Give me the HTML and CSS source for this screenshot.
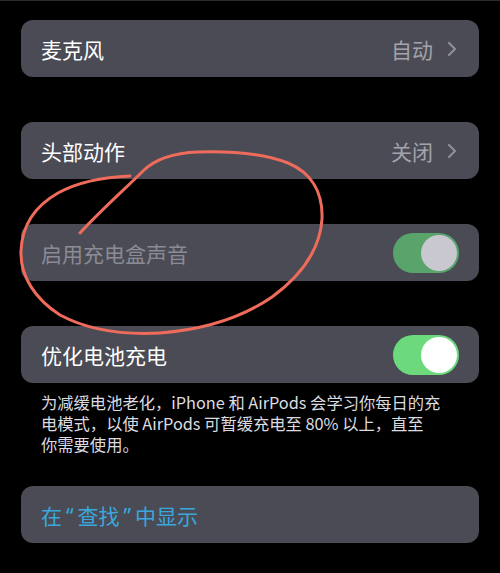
FILE: index.html
```html
<!DOCTYPE html>
<html lang="zh-CN">
<head>
  <meta charset="UTF-8">
  <meta name="viewport" content="width=device-width, initial-scale=1.0">
  <title>AirPods 设置</title>
  <link rel="stylesheet" href="styles.css">
</head>
<body>
  <div class="page">
    <div class="list">
      <div class="card row">
        <span class="label">麦克风</span>
        <span class="value">自动
          <svg class="chevron" width="10" height="16" viewBox="0 0 10 16"><path d="M2 2 L8 8 L2 14" /></svg>
        </span>
      </div>

      <div class="card row">
        <span class="label">头部动作</span>
        <span class="value">关闭
          <svg class="chevron" width="10" height="16" viewBox="0 0 10 16"><path d="M2 2 L8 8 L2 14" /></svg>
        </span>
      </div>

      <div class="card row disabled">
        <span class="label">启用充电盒声音</span>
        <span class="switch on"><span class="knob"></span></span>
      </div>

      <div class="group">
        <div class="card row">
          <span class="label">优化电池充电</span>
          <span class="switch on"><span class="knob"></span></span>
        </div>
        <p class="note">为减缓电池老化，iPhone 和 AirPods 会学习你每日的充<br>电模式，以使 AirPods 可暂缓充电至 80% 以上，直至<br>你需要使用。</p>
      </div>

      <div class="card row">
        <span class="label link">在<span class="quote">“</span>查找<span class="quote">”</span>中显示</span>
      </div>
    </div>

    <svg class="scribble" width="500" height="573" viewBox="0 0 500 573">
      <path d="M130 175 C105 176 80 180 58 192 C35 205 22 225 21 250 C20 275 35 298 60 314 C90 330 125 334 160 332 C200 329 240 318 272 296 C302 274 320 248 322 218 C323 192 312 172 288 162 C262 152 230 150 198 151 C172 152 155 158 143 170 C125 188 100 210 80 232" />
    </svg>
  </div>
</body>
</html>
```

FILE: styles.css
```css
body {
  margin: 0;
  background: #000;
  font-family: "Noto Sans CJK SC", "Noto Sans", sans-serif;
  color: #fff;
}
.page {
  position: relative;
  width: 500px;
  height: 573px;
  overflow: hidden;
  border-top: 1px solid #2b2b2e;
  box-sizing: border-box;
}
.list {
  display: flex;
  flex-direction: column;
  gap: 45px;
  padding: 19px 21px 0;
}
.card {
  background: #4a4b55;
  border-radius: 12px;
  height: 57px;
}
.row {
  display: flex;
  align-items: center;
  justify-content: space-between;
  padding: 0 20px;
}
.label {
  font-size: 21px;
}
.value {
  display: flex;
  align-items: center;
  gap: 14px;
  font-size: 21px;
  color: #a3a3ab;
  padding-right: 2px;
}
.chevron path {
  fill: none;
  stroke: #8e8e96;
  stroke-width: 2.2;
  stroke-linecap: round;
  stroke-linejoin: round;
}
.disabled .label {
  color: #8a8b94;
}
.switch {
  position: relative;
  width: 66px;
  height: 40px;
  border-radius: 20px;
  background: #6bd97c;
}
.switch .knob {
  position: absolute;
  top: 2px;
  right: 2px;
  width: 36px;
  height: 36px;
  border-radius: 50%;
  background: #fff;
}
.disabled .switch {
  background: #58a46b;
}
.disabled .knob {
  background: #c9c8d1;
}
.group {
  margin-bottom: -14px;
}
.group .note {
  margin: 9px 0 0;
  padding: 0 20px;
  font-size: 16.3px;
  line-height: 21px;
  color: #dcdce0;
}
.link {
  color: #3aa7df;
}
.quote {
  font-family: "Noto Sans", sans-serif;
  margin: 0 4px;
}
.scribble {
  position: absolute;
  top: 0;
  left: 0;
  pointer-events: none;
}
.scribble path {
  fill: none;
  stroke: #ef6b5b;
  stroke-width: 3;
  stroke-linecap: round;
}
```
